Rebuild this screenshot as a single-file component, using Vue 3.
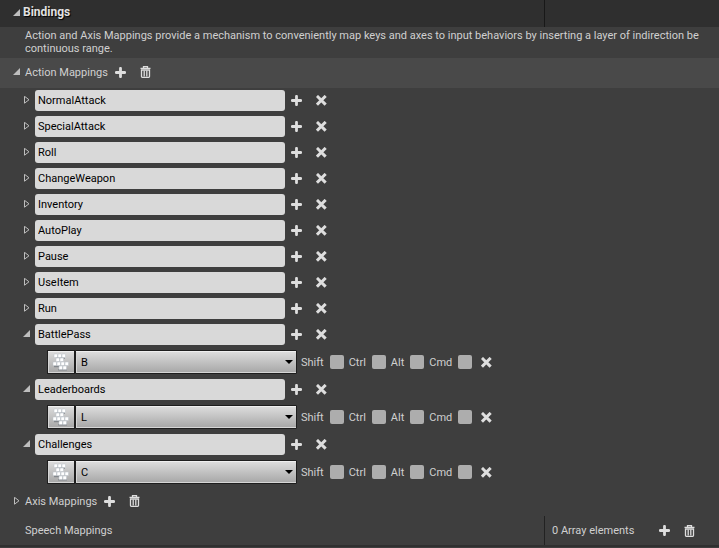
<script setup>
import { reactive, ref } from 'vue'

const names = ['NormalAttack', 'SpecialAttack', 'Roll', 'ChangeWeapon', 'Inventory', 'AutoPlay', 'Pause', 'UseItem', 'Run']
const modifiers = ['Shift', 'Ctrl', 'Alt', 'Cmd']
const makeAction = (name, key) => ({ name, key, open: Boolean(key), mods: { Shift: false, Ctrl: false, Alt: false, Cmd: false } })
const actions = reactive([
  ...names.map((n) => makeAction(n, '')),
  makeAction('BattlePass', 'B'),
  makeAction('Leaderboards', 'L'),
  makeAction('Challenges', 'C'),
])
const keys = ['B', 'L', 'C']
const keycaps = [[2, 1], [6, 1], [10, 1], [4, 5], [8, 5], [1, 9], [5, 9], [9, 9], [13, 9], [7, 13], [11, 13]]
const bindingsOpen = ref(true)
const actionsOpen = ref(true)
</script>

<template>
  <svg class="defs" aria-hidden="true">
    <symbol id="plus" viewBox="0 0 11 11">
      <path d="M5.5 1.3V9.7M1.3 5.5H9.7" fill="none" stroke="currentColor" stroke-width="2.8" stroke-linecap="round" />
    </symbol>
    <symbol id="cross" viewBox="0 0 11 11">
      <path d="M2 2L8.6 8.6M8.6 2L2 8.6" fill="none" stroke="currentColor" stroke-width="3" stroke-linecap="square" />
    </symbol>
    <symbol id="trash" viewBox="0 0 11 12">
      <path d="M0.5 2.3H10.5M3.5 1.7V0.7H7.5V1.7" fill="none" stroke="currentColor" stroke-width="1.3" />
      <path d="M1.5 4V10.6Q1.5 11.3 2.3 11.3H8.7Q9.5 11.3 9.5 10.6V4Z" fill="none" stroke="currentColor" stroke-width="1.3" />
      <path d="M4.2 4.5V10.5M6.8 4.5V10.5" stroke="currentColor" stroke-width="1.3" />
    </symbol>
    <symbol id="opened" viewBox="0 0 8 8"><path d="M8 0V7H1Z" fill="#bebebe" /></symbol>
    <symbol id="closed" viewBox="0 0 8 8"><path d="M2.5 0.3V7.2L7 3.75Z" fill="none" stroke="#bebebe" stroke-width="1" /></symbol>
  </svg>

  <main class="panel">
    <header class="title">
      <div class="title-name">
        <button class="arrow" aria-label="Toggle Bindings" @click="bindingsOpen = !bindingsOpen">
          <svg><use :href="bindingsOpen ? '#opened' : '#closed'" /></svg>
        </button>
        <h1>Bindings</h1>
      </div>
      <div class="title-value"></div>
    </header>

    <p class="about">
      Action and Axis Mappings provide a mechanism to conveniently map keys and axes to input behaviors by inserting a layer of indirection be<br />continuous range.
    </p>

    <div class="group lit">
      <button class="arrow" aria-label="Toggle Action Mappings" @click="actionsOpen = !actionsOpen">
        <svg><use :href="actionsOpen ? '#opened' : '#closed'" /></svg>
      </button>
      <h2>Action Mappings</h2>
      <button class="tool" aria-label="Add action mapping"><svg><use href="#plus" /></svg></button>
      <button class="tool trash" aria-label="Remove all action mappings"><svg><use href="#trash" /></svg></button>
    </div>

    <section v-if="actionsOpen" class="list">
      <template v-for="action in actions" :key="action.name">
        <div class="action">
          <button class="arrow" :aria-label="`Toggle ${action.name}`" @click="action.open = !action.open">
            <svg><use :href="action.open ? '#opened' : '#closed'" /></svg>
          </button>
          <input class="name" type="text" :value="action.name" aria-label="Action name" />
          <button class="tool" :aria-label="`Add key to ${action.name}`"><svg><use href="#plus" /></svg></button>
          <button class="tool" :aria-label="`Remove ${action.name}`"><svg><use href="#cross" /></svg></button>
        </div>
        <div v-if="action.open && action.key" class="binding">
          <button class="capture" aria-label="Press a key">
            <svg viewBox="0 0 18 18">
              <path d="M2 13.5H8M6 16.8H15M4 5.200H13" stroke="#84888d" stroke-width="1.300" />
              <rect v-for="(cap, i) in keycaps" :key="i" :x="cap[0]" :y="cap[1]" width="3.500" height="3.500" rx="0.500" fill="#fff" stroke="#b9c0c8" stroke-width="0.500" />
            </svg>
          </button>
          <div class="picker">
            <select v-model="action.key" aria-label="Key">
              <option v-for="k in keys" :key="k">{{ k }}</option>
            </select>
            <svg class="caret" viewBox="0 0 8 4"><path d="M0 0H8L4 4Z" /></svg>
          </div>
          <label v-for="mod in modifiers" :key="mod">{{ mod }}<input v-model="action.mods[mod]" type="checkbox" /></label>
          <button class="tool" aria-label="Remove key"><svg><use href="#cross" /></svg></button>
        </div>
      </template>
    </section>

    <div class="group">
      <button class="arrow" aria-label="Toggle Axis Mappings"><svg><use href="#closed" /></svg></button>
      <h2>Axis Mappings</h2>
      <button class="tool" aria-label="Add axis mapping"><svg><use href="#plus" /></svg></button>
      <button class="tool trash" aria-label="Remove all axis mappings"><svg><use href="#trash" /></svg></button>
    </div>

    <div class="speech">
      <h2>Speech Mappings</h2>
      <div class="speech-value">
        <span>0 Array elements</span>
        <button class="tool" aria-label="Add speech mapping"><svg><use href="#plus" /></svg></button>
        <button class="tool trash" aria-label="Remove all speech mappings"><svg><use href="#trash" /></svg></button>
      </div>
    </div>
  </main>
</template>

<style>
body {
  background: #3e3e3e;
}
</style>

<style scoped>
.defs {
  display: none;
}
.panel {
  overflow: hidden;
  color: #d0d0d0;
  font: 11px/13px Roboto, sans-serif;
  border-bottom: 2px solid #303030;
}
h1,
h2,
p {
  margin: 0;
  font-size: inherit;
  font-weight: 400;
}
button,
input,
select {
  box-sizing: border-box;
  margin: 0;
  padding: 0;
  border: 0;
  font: inherit;
  background: none;
}
svg {
  display: block;
}
.title,
.speech {
  display: grid;
  grid-template-columns: 544fr 175fr;
}
.title {
  height: 27px;
  background: #2f2f2f;
}
.title-name {
  display: flex;
  align-items: center;
  gap: 3px;
  padding: 0 0 2px 12px;
}
.title h1 {
  color: #e2e2e2;
  font-size: 12px;
  font-weight: 700;
  text-shadow: 1px 1px 1px #000;
}
.title-value {
  border-left: 1px solid #181818;
}
.about {
  padding: 2px 0 3px 25px;
  white-space: nowrap;
}
.arrow {
  width: 8px;
  height: 8px;
  flex: none;
}
.arrow svg {
  width: 8px;
  height: 8px;
}
.tool {
  width: 11px;
  height: 12px;
  flex: none;
  color: #dedede;
}
.tool svg {
  width: 11px;
  height: 11px;
}
.trash svg {
  height: 12px;
}
.group {
  display: flex;
  align-items: center;
  box-sizing: border-box;
  height: 29px;
  padding: 0 0 1px 12px;
}
.lit {
  height: 30px;
  padding-bottom: 2px;
  background: #494949;
}
.group .arrow {
  margin-right: 5px;
}
.group .tool {
  margin-left: 7px;
}
.tool + .trash,
.group .tool + .trash {
  margin-left: 14px;
}
.list {
  display: flex;
  flex-direction: column;
  gap: 5px;
  padding: 2px 0 3px 22px;
}
.action {
  display: flex;
  align-items: center;
  height: 21px;
}
.action .arrow {
  margin-bottom: 1px;
}
.name {
  width: 250px;
  height: 21px;
  margin: 0 6px 0 5px;
  padding: 0 3px;
  border-radius: 3px;
  background: #d9d9d9;
  color: #000;
}
.action .tool + .tool {
  margin-left: 14px;
}
.binding {
  display: flex;
  align-items: center;
  height: 24px;
  padding-left: 25px;
}
.capture,
.picker select {
  height: 24px;
  border: 1px solid #1e1e1e;
  background: linear-gradient(#dedede, #a6a6a6);
  box-shadow: inset 0 1px #efefef, inset 0 -1px #d6d6d6, inset 1px 0 #d6d6d6;
}
.capture {
  width: 28px;
  padding: 0 4px;
}
.capture svg {
  width: 18px;
  height: 18px;
}
.picker {
  position: relative;
  margin-right: 4px;
}
.picker select {
  appearance: none;
  display: block;
  width: 222px;
  padding: 0 20px 0 5px;
  border-radius: 1px;
  color: #000;
}
.caret {
  position: absolute;
  right: 4px;
  top: 10px;
  width: 8px;
  height: 4px;
  pointer-events: none;
}
.binding label {
  display: flex;
  align-items: center;
  gap: 6px;
  margin-right: 5px;
}
.binding input {
  appearance: none;
  width: 14px;
  height: 14px;
  border-radius: 2px;
  background: #adadad;
}
.binding input:checked {
  background: #e39a3a;
}
.binding .tool {
  margin-left: 4px;
}
.speech {
  height: 29px;
}
.speech h2 {
  align-self: center;
  padding-left: 25px;
}
.speech-value {
  display: flex;
  align-items: center;
  padding-left: 7px;
  border-left: 1px solid #222;
}
.speech-value span {
  margin-right: 25px;
}
</style>
